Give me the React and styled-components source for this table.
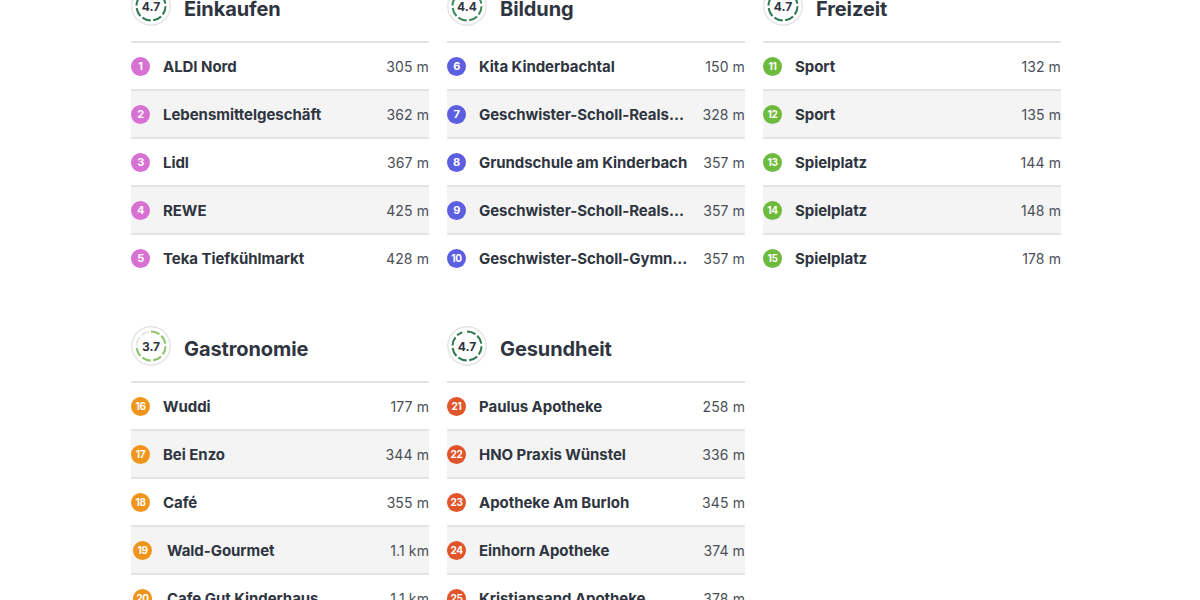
import React from "react";
import styled, { createGlobalStyle } from "styled-components";

const Global = createGlobalStyle`
  html, body { margin: 0; padding: 0; background: #fff; }
  body { font-family: Inter, "Noto Sans", sans-serif; color: #2f3540; overflow: hidden; }
`;

const Page = styled.div`
  width: 1200px;
  height: 600px;
  overflow: hidden;
  padding-left: 131px;
  box-sizing: border-box;
`;

const Grid = styled.div`
  display: grid;
  grid-template-columns: repeat(3, 298px);
  column-gap: 18px;
  row-gap: 43px;
  margin-top: -14px;
`;

const Section = styled.section`
  display: flex;
  flex-direction: column;
`;

const Header = styled.div`
  display: flex;
  align-items: center;
  gap: 13px;
  height: 40px;
  padding-bottom: 15px;
  border-bottom: 2px solid #e3e3e3;
`;

const Title = styled.h2`
  margin: 6px 0 0;
  font-size: 20px;
  font-weight: 700;
  color: #2f3540;
  letter-spacing: -0.1px;
`;

const ScoreWrap = styled.div`
  position: relative;
  width: 40px;
  height: 40px;
  flex: none;
`;

const ScoreText = styled.span`
  position: absolute;
  inset: 0;
  display: flex;
  align-items: center;
  justify-content: center;
  font-size: 12px;
  font-weight: 700;
  color: #2f3540;
`;

const Row = styled.div`
  display: flex;
  align-items: center;
  height: 46px;
  border-bottom: 2px solid ${(p) => (p.$last ? "transparent" : "#e3e3e3")};
  background: ${(p) => (p.$alt ? "#f4f4f4" : "#fff")};
  gap: 13px;
`;

const Badge = styled.span`
  flex: none;
  width: 19px;
  height: 19px;
  border-radius: 50%;
  background: ${(p) => p.$color};
  color: #fff;
  font-size: ${(p) => (p.$num > 9 ? "10px" : "11px")};
  font-weight: 700;
  letter-spacing: -0.4px;
  display: flex;
  align-items: center;
  justify-content: center;
  margin-right: ${(p) => (p.$shift ? "2px" : "0")};
  margin-left: ${(p) => (p.$shift ? "2px" : "0")};
`;

const Name = styled.span`
  flex: 1;
  min-width: 0;
  font-size: 15px;
  font-weight: 700;
  color: #2f3540;
  letter-spacing: -0.05px;
  white-space: nowrap;
  overflow: hidden;
  text-overflow: ellipsis;
`;

const Dist = styled.span`
  flex: none;
  font-size: 14px;
  color: #4a4f57;
  letter-spacing: 0.1px;
`;

function Score({ value, color }) {
  const r = 14.5;
  const c = 2 * Math.PI * r;
  const frac = value / 5;
  const segs = 8;
  const seg = c / segs;
  const dash = seg * 0.78;
  const gap = seg - dash;
  const id = `m${String(value).replace(".", "")}${color.replace("#", "")}`;
  return (
    <ScoreWrap>
      <svg width="40" height="40" viewBox="0 0 40 40">
        <defs>
          <mask id={id}>
            <circle
              cx="20"
              cy="20"
              r={r}
              fill="none"
              stroke="#fff"
              strokeWidth="4"
              strokeDasharray={`${c * frac} ${c}`}
            />
          </mask>
        </defs>
        <circle cx="20" cy="20" r="19.2" fill="#fff" stroke="#e4e4e4" strokeWidth="1.4" />
        <g transform="rotate(-90 20 20)">
          <circle
            cx="20"
            cy="20"
            r={r}
            fill="none"
            stroke="#e6e6e6"
            strokeWidth="2"
            strokeDasharray={`${dash} ${gap}`}
          />
          <circle
            cx="20"
            cy="20"
            r={r}
            fill="none"
            stroke={color}
            strokeWidth="2"
            strokeDasharray={`${dash} ${gap}`}
            mask={`url(#${id})`}
          />
        </g>
      </svg>
      <ScoreText>{value.toFixed(1)}</ScoreText>
    </ScoreWrap>
  );
}

const sections = [
  {
    title: "Einkaufen",
    score: 4.7,
    ring: "#2f7a52",
    color: "#d771d3",
    items: [
      ["ALDI Nord", "305 m"],
      ["Lebensmittelgeschäft", "362 m"],
      ["Lidl", "367 m"],
      ["REWE", "425 m"],
      ["Teka Tiefkühlmarkt", "428 m"],
    ],
    start: 1,
  },
  {
    title: "Bildung",
    score: 4.4,
    ring: "#3d8a5e",
    color: "#5c5fe0",
    items: [
      ["Kita Kinderbachtal", "150 m"],
      ["Geschwister-Scholl-Realschule", "328 m"],
      ["Grundschule am Kinderbach", "357 m"],
      ["Geschwister-Scholl-Realschule", "357 m"],
      ["Geschwister-Scholl-Gymnasium", "357 m"],
    ],
    start: 6,
  },
  {
    title: "Freizeit",
    score: 4.7,
    ring: "#2f7a52",
    color: "#6dba3c",
    items: [
      ["Sport", "132 m"],
      ["Sport", "135 m"],
      ["Spielplatz", "144 m"],
      ["Spielplatz", "148 m"],
      ["Spielplatz", "178 m"],
    ],
    start: 11,
  },
  {
    title: "Gastronomie",
    score: 3.7,
    ring: "#8cc56c",
    color: "#f0951c",
    items: [
      ["Wuddi", "177 m"],
      ["Bei Enzo", "344 m"],
      ["Café", "355 m"],
      ["Wald-Gourmet", "1.1 km", true],
      ["Cafe Gut Kinderhaus", "1.1 km", true],
    ],
    start: 16,
  },
  {
    title: "Gesundheit",
    score: 4.7,
    ring: "#2f7a52",
    color: "#e0552a",
    items: [
      ["Paulus Apotheke", "258 m"],
      ["HNO Praxis Wünstel", "336 m"],
      ["Apotheke Am Burloh", "345 m"],
      ["Einhorn Apotheke", "374 m"],
      ["Kristiansand Apotheke", "378 m"],
    ],
    start: 21,
  },
];

export default function App() {
  return (
    <>
      <Global />
      <Page>
        <Grid>
          {sections.map((s) => (
            <Section key={s.title}>
              <Header>
                <Score value={s.score} color={s.ring} />
                <Title>{s.title}</Title>
              </Header>
              {s.items.map(([name, dist, shift], i) => (
                <Row key={i} $alt={i % 2 === 1} $last={i === s.items.length - 1}>
                  <Badge $color={s.color} $num={s.start + i} $shift={shift}>
                    {s.start + i}
                  </Badge>
                  <Name>{name}</Name>
                  <Dist>{dist}</Dist>
                </Row>
              ))}
            </Section>
          ))}
        </Grid>
      </Page>
    </>
  );
}
